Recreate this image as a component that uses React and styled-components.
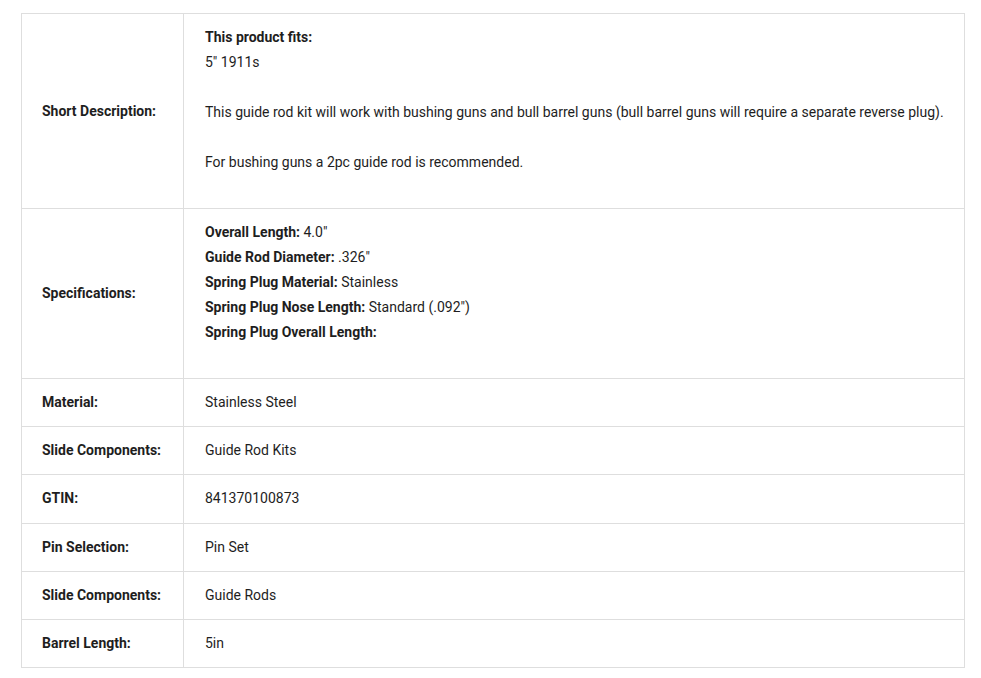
import styled, { createGlobalStyle } from 'styled-components';

const GlobalStyle = createGlobalStyle`
  body {
    margin: 0;
    background: #fff;
    font-family: Roboto, "Liberation Sans", sans-serif;
    color: #1e1e1e;
  }
`;

const rows = [
  {
    label: 'Short Description:',
    rich: true,
    value: (
      <>
        <p>
          <b>This product fits:</b>
          <br />
          5" 1911s
        </p>
        <p>
          This guide rod kit will work with bushing guns and bull barrel guns (bull barrel guns will
          require a separate reverse plug).
        </p>
        <p>For bushing guns a 2pc guide rod is recommended.</p>
      </>
    ),
  },
  {
    label: 'Specifications:',
    rich: true,
    value: (
      <p>
        <b>Overall Length:</b> 4.0"
        <br />
        <b>Guide Rod Diameter:</b> .326"
        <br />
        <b>Spring Plug Material:</b> Stainless
        <br />
        <b>Spring Plug Nose Length:</b> Standard (.092")
        <br />
        <b>Spring Plug Overall Length:</b>
      </p>
    ),
  },
  { label: 'Material:', value: 'Stainless Steel' },
  { label: 'Slide Components:', value: 'Guide Rod Kits' },
  { label: 'GTIN:', value: '841370100873' },
  { label: 'Pin Selection:', value: 'Pin Set' },
  { label: 'Slide Components:', value: 'Guide Rods' },
  { label: 'Barrel Length:', value: '5in' },
];

export default function App() {
  return (
    <Page>
      <GlobalStyle />
      <SpecTable>
        <colgroup>
          <col style={{ width: 162 }} />
          <col />
        </colgroup>
        <tbody>
          {rows.map((row, i) => (
            <tr key={i}>
              <Label>{row.label}</Label>
              <Value rich={row.rich ? 1 : 0}>{row.value}</Value>
            </tr>
          ))}
        </tbody>
      </SpecTable>
    </Page>
  );
}

const Page = styled.div`
  padding: 13px 0 0 21px;
`;

const SpecTable = styled.table`
  width: 944px;
  border-collapse: collapse;
  table-layout: fixed;
  font-size: 14px;
  line-height: 25px;
`;

const Label = styled.th`
  border: 1px solid #dedede;
  padding: 0 20px;
  text-align: left;
  vertical-align: middle;
  font-weight: 700;
`;

const Value = styled.td`
  border: 1px solid #dedede;
  padding: ${(props) => (props.rich ? '11px 20px 8px 21px' : '11.1px 20px 11.1px 21px')};
  vertical-align: top;

  p {
    margin: 0 0 25px;
  }

  b {
    font-weight: 700;
  }
`;
